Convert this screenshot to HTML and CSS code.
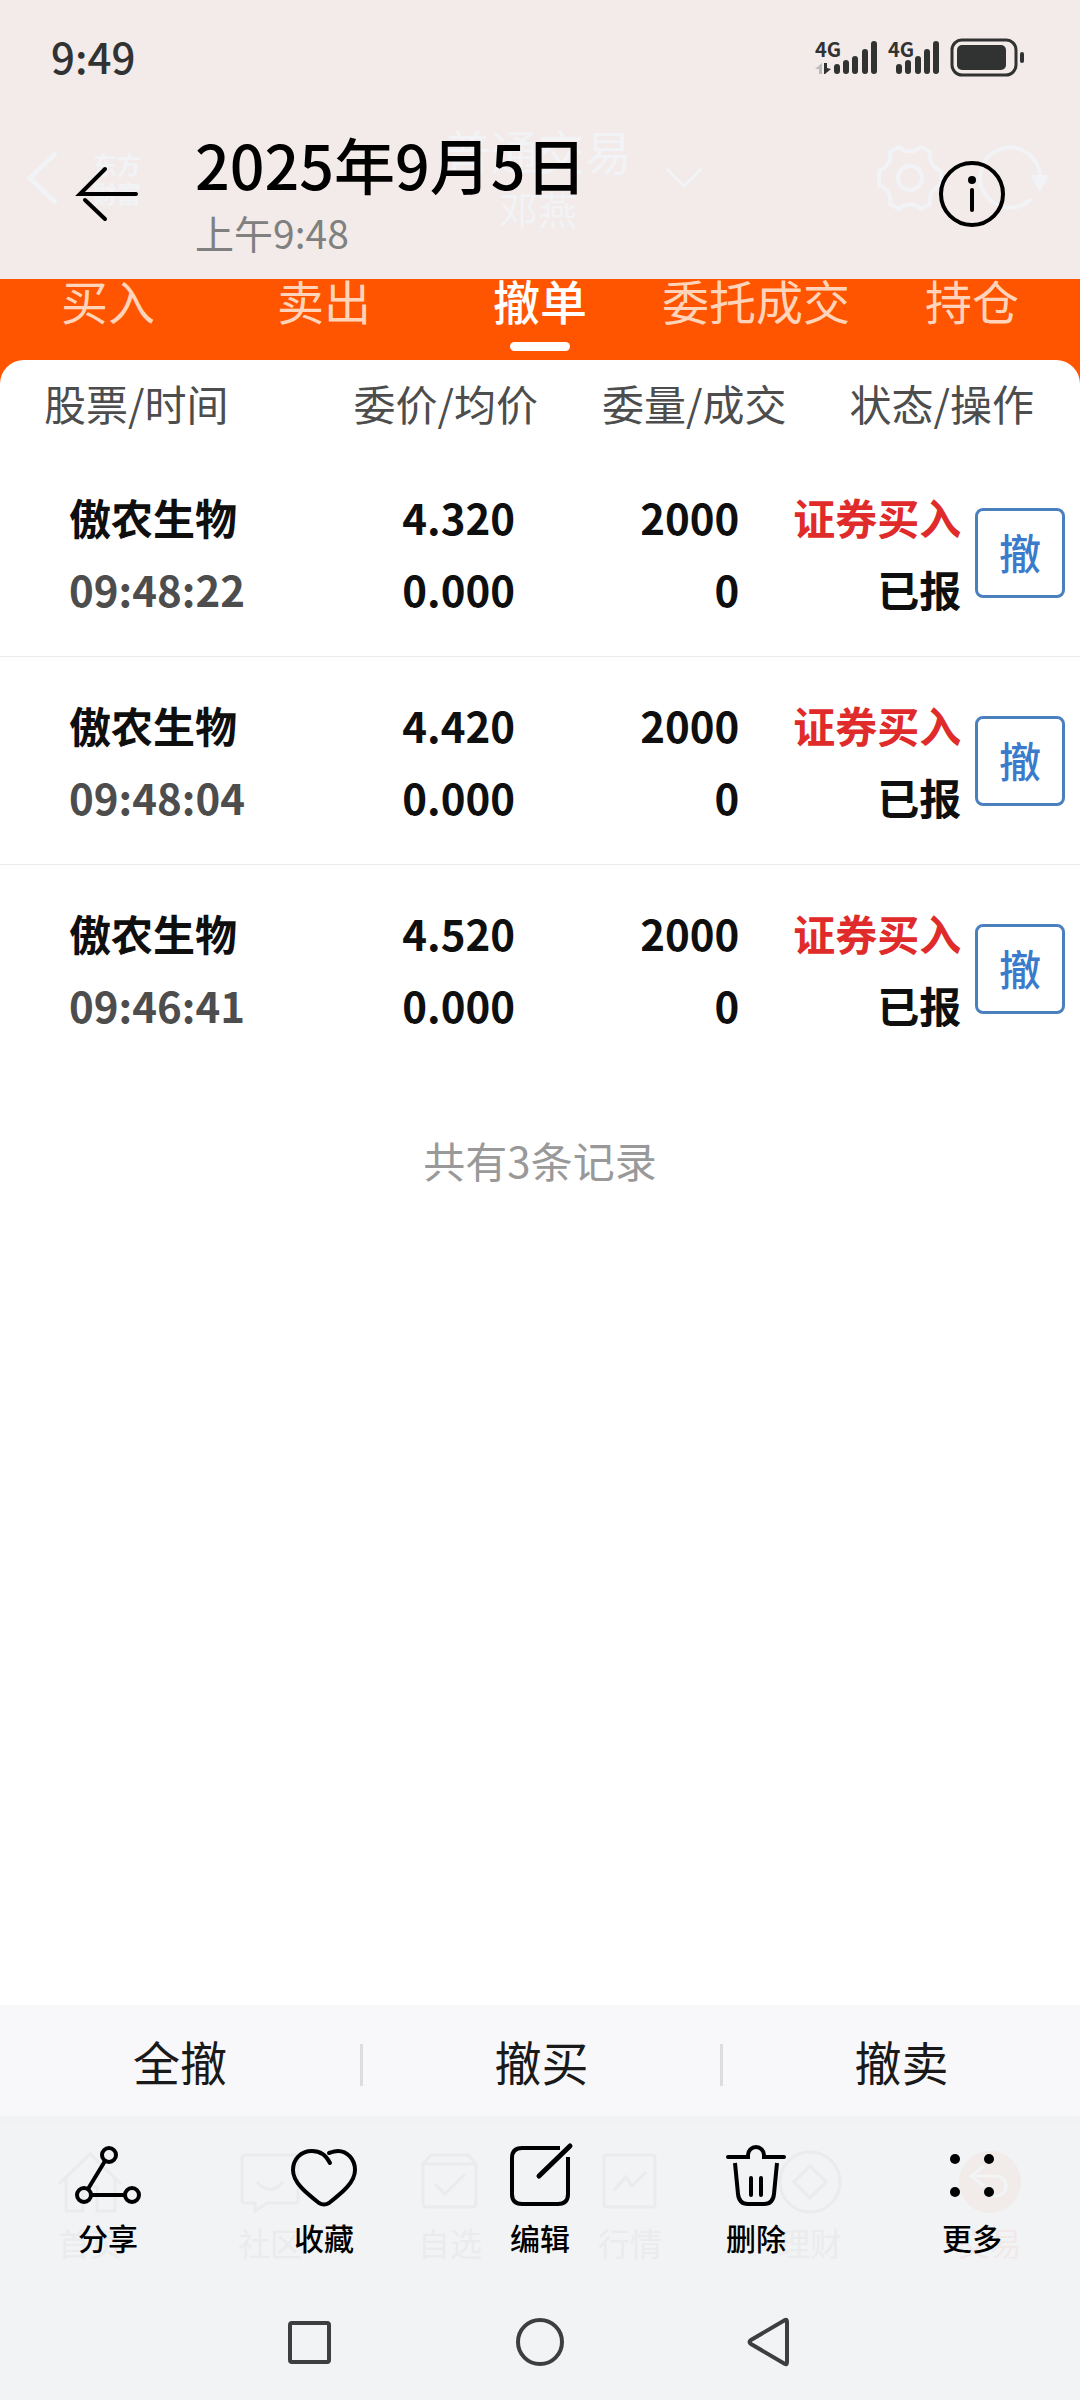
FILE: index.html
```html
<!DOCTYPE html>
<html lang="zh-CN">
<head>
  <meta charset="UTF-8">
  <meta name="viewport" content="width=device-width, initial-scale=1.0">
  <title>2025年9月5日</title>
  <link rel="stylesheet" href="styles.css">
</head>
<body>

<header class="top">
  <!-- trading app title bar, showing faintly through -->
  <div class="faded-bar" aria-hidden="true">
    <div class="faded-left">
      <svg width="32" height="56" viewBox="0 0 32 56"><path d="M29 3L3 28L29 53" fill="none" stroke="currentColor" stroke-width="5"/></svg>
      <span class="faded-logo">东方<br>财富</span>
    </div>
    <div class="faded-title">
      <div class="faded-name">普通交易</div>
      <div class="faded-user">邓燕</div>
    </div>
    <div class="faded-right">
      <svg class="faded-arrow" width="36" height="22" viewBox="0 0 36 22"><path d="M1 2L18 19L35 2" fill="none" stroke="currentColor" stroke-width="3"/></svg>
      <svg width="66" height="66" viewBox="0 0 66 66" fill="none" stroke="currentColor" stroke-width="4">
        <path d="M22 2Q33 11 44 2L53 7Q51 20 64 26V40Q51 46 53 59L44 64Q33 55 22 64L13 59Q15 46 2 40V26Q15 20 13 7Z"/>
        <circle cx="33" cy="33" r="12"/>
      </svg>
      <svg width="70" height="66" viewBox="0 0 70 66">
        <path d="M52 54A30 30 0 1 1 61 32" fill="none" stroke="currentColor" stroke-width="4"/>
        <path d="M51 30H70L61 47Z" fill="currentColor"/>
      </svg>
    </div>
  </div>

  <div class="status">
    <span class="clock">9:49</span>
    <svg width="210" height="40" viewBox="815 36 210 40" role="img" aria-label="信号和电量">
      <g class="net">
        <text x="815" y="56">4G</text>
        <text x="888" y="56">4G</text>
      </g>
      <path d="M815 68L822 62V73H819V68Z" fill="#babcbc"/>
      <path d="M824 62H827V67L831 68L825 73H824Z" fill="#303332"/>
      <g stroke="#303332" stroke-width="6" stroke-linecap="round">
        <path d="M837 66V70M846 62V70M855 58V70M865 51V70M874 43V70"/>
        <path d="M899 66V70M908 62V70M918 58V70M927 51V70M936 43V70"/>
      </g>
      <rect x="952" y="39" width="64" height="35" rx="10" fill="none" stroke="#303332" stroke-width="3"/>
      <rect x="957" y="44" width="49" height="25" rx="5" fill="#303332"/>
      <rect x="1020" y="51" width="4" height="11" rx="2" fill="#303332"/>
    </svg>
  </div>

  <div class="photo-bar">
    <button class="icon-btn" aria-label="返回">
      <svg width="60" height="56" viewBox="0 0 60 56" fill="none" stroke="#000" stroke-width="4" stroke-linecap="round">
        <path d="M27 3L2 28H58M7 34L27 53"/>
      </svg>
    </button>
    <div class="photo-date">
      <h1>2025年9月5日</h1>
      <p>上午9:48</p>
    </div>
    <button class="icon-btn" aria-label="详情">
      <svg width="66" height="66" viewBox="0 0 66 66">
        <circle cx="33" cy="33" r="31" fill="none" stroke="#000" stroke-width="4"/>
        <circle cx="33" cy="19" r="4"/>
        <path d="M33 29V49" stroke="#000" stroke-width="4" stroke-linecap="round"/>
      </svg>
    </button>
  </div>
</header>

<main>
  <nav class="tabs">
    <a href="#">买入</a>
    <a href="#">卖出</a>
    <a href="#" class="active">撤单</a>
    <a href="#">委托成交</a>
    <a href="#">持仓</a>
  </nav>

  <section class="orders">
    <table>
      <colgroup>
        <col class="col-stock">
        <col class="col-price">
        <col class="col-amount">
        <col class="col-state">
        <col class="col-action">
      </colgroup>
      <thead>
        <tr>
          <th class="stock">股票/时间</th>
          <th>委价/均价</th>
          <th>委量/成交</th>
          <th class="state" colspan="2">状态/操作</th>
        </tr>
      </thead>
      <tbody>
        <tr>
          <td class="stock">傲农生物<br><span class="time">09:48:22</span></td>
          <td class="price">4.320<br>0.000</td>
          <td class="amount">2000<br>0</td>
          <td><span class="buy">证券买入</span><br>已报</td>
          <td class="action"><button class="cancel">撤</button></td>
        </tr>
        <tr>
          <td class="stock">傲农生物<br><span class="time">09:48:04</span></td>
          <td class="price">4.420<br>0.000</td>
          <td class="amount">2000<br>0</td>
          <td><span class="buy">证券买入</span><br>已报</td>
          <td class="action"><button class="cancel">撤</button></td>
        </tr>
        <tr>
          <td class="stock">傲农生物<br><span class="time">09:46:41</span></td>
          <td class="price">4.520<br>0.000</td>
          <td class="amount">2000<br>0</td>
          <td><span class="buy">证券买入</span><br>已报</td>
          <td class="action"><button class="cancel">撤</button></td>
        </tr>
      </tbody>
    </table>
    <p class="total">共有3条记录</p>
  </section>

  <div class="batch">
    <button>全撤</button>
    <button>撤买</button>
    <button>撤卖</button>
  </div>
</main>

<footer class="bottom">
  <!-- trading app tab bar, showing faintly through -->
  <div class="faded-tabs" aria-hidden="true">
    <div>
      <svg width="64" height="64" viewBox="0 0 64 64"><path d="M1 34L32 4L63 34M8 28V61H25V37H39V61H57V28"/></svg>
      <span>首页</span>
    </div>
    <div>
      <svg width="64" height="64" viewBox="0 0 64 64"><path d="M7 5H57Q60 5 60 8V50Q60 53 57 53H29L17 61V53H7Q4 53 4 50V8Q4 5 7 5ZM19 32Q32 47 45 32"/></svg>
      <span>社区</span>
    </div>
    <div>
      <svg width="64" height="64" viewBox="0 0 64 64"><path d="M5 14L13 5H50L58 14V53Q58 57 54 57H9Q5 57 5 53V14H58M17 34L27 44L47 24"/></svg>
      <span>自选</span>
    </div>
    <div>
      <svg width="64" height="64" viewBox="0 0 64 64"><rect x="6" y="5" width="51" height="52" rx="3"/><path d="M16 40L28 27L34 36L48 22"/></svg>
      <span>行情</span>
    </div>
    <div>
      <svg width="64" height="64" viewBox="0 0 64 64"><circle cx="32" cy="32" r="30"/><path d="M32 16L48 32L32 48L16 32Z"/></svg>
      <span>理财</span>
    </div>
    <div class="trade">
      <svg width="64" height="64" viewBox="0 0 64 64"><circle cx="32" cy="32" r="31" fill="#f1ebe9" stroke="none"/><path d="M26 16L13 26L26 36M14 26H38A10 10 0 0 1 38 46H32" stroke="#f3f4f6"/></svg>
      <span>交易</span>
    </div>
  </div>

  <div class="tools">
    <button>
      <svg width="66" height="66" viewBox="0 0 66 66">
        <circle cx="34" cy="13" r="7"/><circle cx="9" cy="53" r="7"/><circle cx="57" cy="53" r="7"/>
        <path d="M30 19L13 47M16 53H50"/>
      </svg>
      分享
    </button>
    <button>
      <svg width="66" height="66" viewBox="0 0 66 66">
        <path d="M39 21C35 13 28 9 21 9C10 9 2 17 2 28C2 40 14 50 28 61Q33 64 38 61C52 50 64 40 64 28C64 17 56 9 47 9C44 9 41 10 38 11"/>
      </svg>
      收藏
    </button>
    <button>
      <svg width="66" height="66" viewBox="0 0 66 66">
        <path stroke-linecap="butt" d="M53 6H15Q5 6 5 16V52Q5 62 15 62H51Q61 62 61 52V15"/>
        <path d="M32 34L63 4" stroke-width="5"/>
      </svg>
      编辑
    </button>
    <button>
      <svg width="66" height="66" viewBox="0 0 66 66">
        <path d="M5 15H25V13A8 8 0 0 1 41 13V15H61M28 36V53M38 36V53"/>
        <path stroke-linecap="butt" d="M12 21L15 52Q16 62 25 62H41Q50 62 51 52L54 21"/>
      </svg>
      删除
    </button>
    <button>
      <svg width="66" height="66" viewBox="0 0 66 66">
        <g fill="#000" stroke="none"><circle cx="16" cy="17" r="5"/><circle cx="50" cy="17" r="5"/><circle cx="16" cy="50" r="5"/><circle cx="50" cy="50" r="5"/></g>
      </svg>
      更多
    </button>
  </div>

  <div class="sys-nav">
    <button aria-label="最近任务"><svg width="48" height="48" viewBox="0 0 48 48"><rect x="4" y="5" width="39" height="39" rx="2"/></svg></button>
    <button aria-label="主屏幕"><svg width="48" height="48" viewBox="0 0 48 48"><circle cx="24" cy="24" r="22"/></svg></button>
    <button aria-label="返回"><svg width="48" height="48" viewBox="0 0 48 48"><path d="M39 2Q41 1 41 4V44Q41 47 39 46L5 26Q2 24 5 22Z"/></svg></button>
  </div>
</footer>

</body>
</html>
```
FILE: styles.css
```css
* {
  box-sizing: border-box;
}
body {
  margin: 0;
  min-height: 100vh;
  display: flex;
  flex-direction: column;
  font-family: "Noto Sans CJK SC", sans-serif;
  font-size: 42px;
  color: #0f0f0f;
  background: #fff;
}
h1, p {
  margin: 0;
}
button {
  font: inherit;
  color: inherit;
  background: none;
  border: none;
  padding: 0;
  cursor: pointer;
}
svg {
  display: block;
  overflow: visible;
}

/* header */
.top {
  position: relative;
  background: #f3ebe9;
}
.status {
  position: relative;
  display: flex;
  align-items: center;
  justify-content: space-between;
  height: 114px;
  padding: 0 55px 0 51px;
}
.clock {
  font-weight: 500;
  line-height: 60px;
  padding-bottom: 2px;
  color: #303332;
}
.net {
  font-size: 20px;
  font-weight: 700;
  fill: #303332;
}
.photo-bar {
  position: relative;
  display: flex;
  align-items: center;
  padding: 12px 75px 17px 78px;
}
.photo-date {
  flex: 1;
  margin-left: 57px;
}
.photo-date h1 {
  font-size: 61px;
  font-weight: 500;
  line-height: 76px;
  color: #000;
}
.photo-date p {
  font-size: 39px;
  line-height: 60px;
  color: #808080;
}

.faded-bar {
  position: absolute;
  inset: 120px 31px 43px 27px;
  display: grid;
  grid-template-columns: 1fr auto 1fr;
  align-items: center;
  color: #f1f3f6;
}
.faded-left, .faded-right {
  display: flex;
  align-items: center;
}
.faded-left {
  gap: 34px;
}
.faded-logo {
  font-size: 24px;
  font-weight: 700;
  line-height: 29px;
}
.faded-title {
  text-align: center;
}
.faded-name {
  font-size: 47px;
  line-height: 60px;
}
.faded-user {
  font-size: 39px;
  line-height: 56px;
}
.faded-right {
  gap: 36px;
}
.faded-arrow {
  margin-left: 34px;
  margin-right: auto;
}

/* tabs */
.tabs {
  display: grid;
  grid-template-columns: repeat(5, 1fr);
  padding-bottom: 33px;
  background: #ff5500;
}
.tabs a {
  font-size: 47px;
  line-height: 42px;
  text-align: center;
  text-decoration: none;
  white-space: nowrap;
  color: #ffd4bb;
}
.tabs a.active {
  color: #fff;
  font-weight: 500;
}
.tabs a::after {
  content: "";
  display: block;
  width: 60px;
  height: 9px;
  margin: 21px auto 0;
  border-radius: 5px;
}
.tabs a.active::after {
  background: #fff;
}

main {
  flex: 1;
  display: flex;
  flex-direction: column;
}

/* order list */
.orders {
  position: relative;
  flex: 1;
  margin-top: -24px;
  border-radius: 24px 24px 0 0;
  background: #fff;
}
table {
  width: 100%;
  table-layout: fixed;
  border-collapse: collapse;
}
.col-stock { width: 30%; }
.col-price { width: 20%; }
.col-amount { width: 23%; }
.col-state { width: 16%; }
.col-action { width: 11%; }
th, td {
  padding: 0;
  text-align: right;
  white-space: nowrap;
}
th {
  height: 89px;
  padding: 0 2px 4px 0;
  font-size: 42px;
  font-weight: 400;
  line-height: 60px;
  color: #4d4d4d;
}
th.stock {
  padding-left: 44px;
  text-align: left;
}
th.state {
  padding-right: 46px;
}
td {
  padding: 32px 0 31px;
  font-weight: 700;
  line-height: 72px;
  border-bottom: 1px solid #ebebeb;
}
tbody tr:last-child td {
  border-bottom-color: transparent;
}
td.stock {
  padding-left: 69px;
  text-align: left;
}
td.price {
  padding-right: 25px;
}
td.amount {
  padding-right: 49px;
}
td.action {
  padding: 0 15px 0 0;
}
.time {
  color: #4d4d4d;
}
.buy {
  color: #e02b2b;
}
.cancel {
  display: block;
  width: 90px;
  height: 90px;
  margin-left: auto;
  padding-bottom: 2px;
  border: 3px solid #4a80bd;
  border-radius: 8px;
  font-weight: 500;
  line-height: 60px;
  color: #3b7bcb;
}
.total {
  padding: 57px 0;
  text-align: center;
  line-height: 60px;
  color: #999;
}

.batch {
  display: grid;
  grid-template-columns: repeat(3, 1fr);
  padding: 39px 0 30px;
  background: #f8f8fa;
}
.batch button {
  padding-bottom: 8px;
  font-size: 47px;
  line-height: 34px;
  color: #1a1a1a;
}
.batch button + button {
  border-left: 3px solid #dddddf;
}

/* bottom */
.bottom {
  position: relative;
  background: #f2f3f5;
}
.faded-tabs {
  position: absolute;
  inset: 0;
  display: grid;
  grid-template-columns: repeat(6, 1fr);
  padding-top: 24px;
  border-top: 10px solid #f1f2f4;
  font-size: 32px;
  line-height: 40px;
  color: #eaebed;
}
.faded-tabs div {
  display: flex;
  flex-direction: column;
  align-items: center;
  gap: 8px;
}
.faded-tabs svg {
  fill: none;
  stroke: currentColor;
  stroke-width: 3;
}
.faded-tabs .trade {
  color: #f0e9e8;
}
.tools {
  position: relative;
  display: grid;
  grid-template-columns: repeat(5, 1fr);
  padding-top: 26px;
}
.tools button {
  display: flex;
  flex-direction: column;
  align-items: center;
  gap: 9px;
  font-size: 30px;
  font-weight: 500;
  line-height: 40px;
  color: #000;
}
.tools svg {
  fill: none;
  stroke: #000;
  stroke-width: 4;
  stroke-linecap: round;
}
.sys-nav {
  position: relative;
  display: grid;
  grid-template-columns: repeat(3, 1fr);
  justify-items: center;
  padding: 61px 18% 34px;
}
.sys-nav svg {
  fill: none;
  stroke: #3e3e3e;
  stroke-width: 4;
}
```
